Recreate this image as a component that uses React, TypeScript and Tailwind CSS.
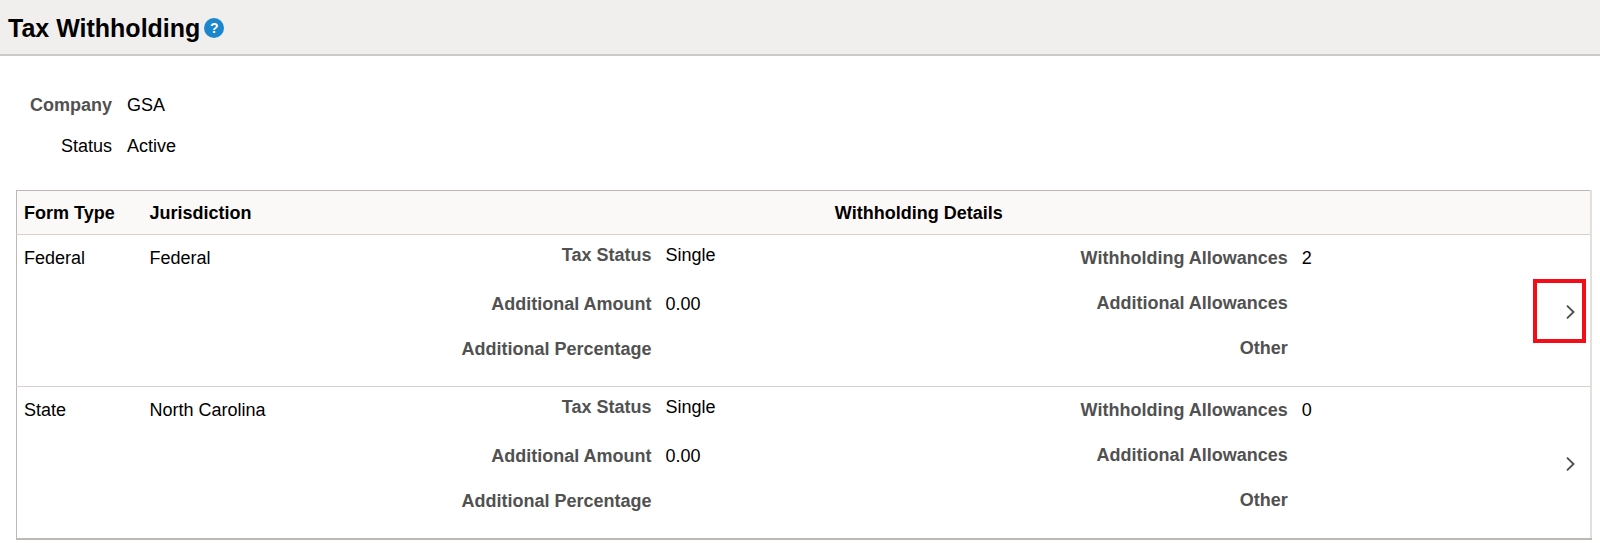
import React from 'react';
import { clsx } from 'clsx';

interface Field {
  label: string;
  value: string;
}

interface Withholding {
  formType: string;
  jurisdiction: string;
  amounts: Field[];
  allowances: Field[];
  highlighted: boolean;
}

const withholdings: Withholding[] = [
  {
    formType: 'Federal',
    jurisdiction: 'Federal',
    amounts: [
      { label: 'Tax Status', value: 'Single' },
      { label: 'Additional Amount', value: '0.00' },
      { label: 'Additional Percentage', value: '' },
    ],
    allowances: [
      { label: 'Withholding Allowances', value: '2' },
      { label: 'Additional Allowances', value: '' },
      { label: 'Other', value: '' },
    ],
    highlighted: true,
  },
  {
    formType: 'State',
    jurisdiction: 'North Carolina',
    amounts: [
      { label: 'Tax Status', value: 'Single' },
      { label: 'Additional Amount', value: '0.00' },
      { label: 'Additional Percentage', value: '' },
    ],
    allowances: [
      { label: 'Withholding Allowances', value: '0' },
      { label: 'Additional Allowances', value: '' },
      { label: 'Other', value: '' },
    ],
    highlighted: false,
  },
];

function FieldList({ fields, className }: { fields: Field[]; className: string }) {
  return (
    <dl className={clsx('grid', className)}>
      {fields.map((field) => (
        <div key={field.label} className="grid grid-cols-[58%_1fr] gap-x-[14px]">
          <dt className="text-right font-bold text-[#515151]">{field.label}</dt>
          <dd>{field.value}</dd>
        </div>
      ))}
    </dl>
  );
}

function WithholdingRow({ item }: { item: Withholding }) {
  return (
    <tr className="border-t border-[#d6d1cc] align-top">
      <td className="pl-[7px] pt-[11px]">{item.formType}</td>
      <td className="pl-[7px] pt-[11px]">{item.jurisdiction}</td>
      <td className="pt-2 pb-[25px]">
        <FieldList fields={item.amounts} className="grid-rows-[49px_45px_24px]" />
      </td>
      <td className="pt-[11px]">
        <FieldList fields={item.allowances} className="grid-rows-[45px_45px_24px]" />
      </td>
      <td className="relative align-middle">
        <button
          type="button"
          aria-label={`Open ${item.formType} withholding`}
          className="flex h-10 w-full items-center justify-end pt-0.5 pr-[15px] cursor-pointer"
        >
          <svg width="9" height="14" viewBox="0 0 9 14" fill="none" stroke="#4a4a4a" strokeWidth="1.800">
            <path d="M1 .7 7.500 7 1 13.300" />
          </svg>
        </button>
        {item.highlighted && (
          <span className="pointer-events-none absolute right-1 top-1/2 h-16 w-[53px] -translate-y-1/2 border-4 border-[#f20d18]" />
        )}
      </td>
    </tr>
  );
}

export default function App() {
  return (
    <div className="bg-white font-['Liberation_Sans',Arial,sans-serif] text-lg/6 text-black">
      {/* Page header */}
      <header className="flex items-center gap-1 border-b-2 border-[#cdc9c5] bg-[#f0efed] px-2 pt-0.5 h-14">
        <h1 className="text-[25px]/8 font-bold">Tax Withholding</h1>
        <button
          type="button"
          aria-label="Help"
          className="flex size-5 items-center justify-center rounded-full bg-[#1c86cc] text-sm/5 font-bold text-white cursor-pointer"
        >
          ?
        </button>
      </header>

      <main className="pl-4 pr-2 pt-[37px]">
        {/* Employee summary */}
        <dl className="grid grid-cols-[96px_1fr] gap-x-[15px] gap-y-[17px]">
          <dt className="text-right font-bold text-[#515151]">Company</dt>
          <dd>GSA</dd>
          <dt className="text-right">Status</dt>
          <dd>Active</dd>
        </dl>

        <table className="mt-8 w-full table-fixed border-collapse border border-r-2 border-b-2 border-[#bdb8b3] border-r-[#e2dfdc]">
          <colgroup>
            <col className="w-[126px]" />
            <col className="w-[140px]" />
            <col />
            <col />
            <col className="w-9" />
          </colgroup>
          <thead>
            <tr className="h-11 bg-[#faf9f8] text-left">
              <th className="pl-[7px]">Form Type</th>
              <th className="pl-[7px]">Jurisdiction</th>
              <th colSpan={2} className="text-center">Withholding Details</th>
              <td></td>
            </tr>
          </thead>
          <tbody>
            {withholdings.map((item) => (
              <WithholdingRow key={item.formType} item={item} />
            ))}
          </tbody>
        </table>
      </main>
    </div>
  );
}
